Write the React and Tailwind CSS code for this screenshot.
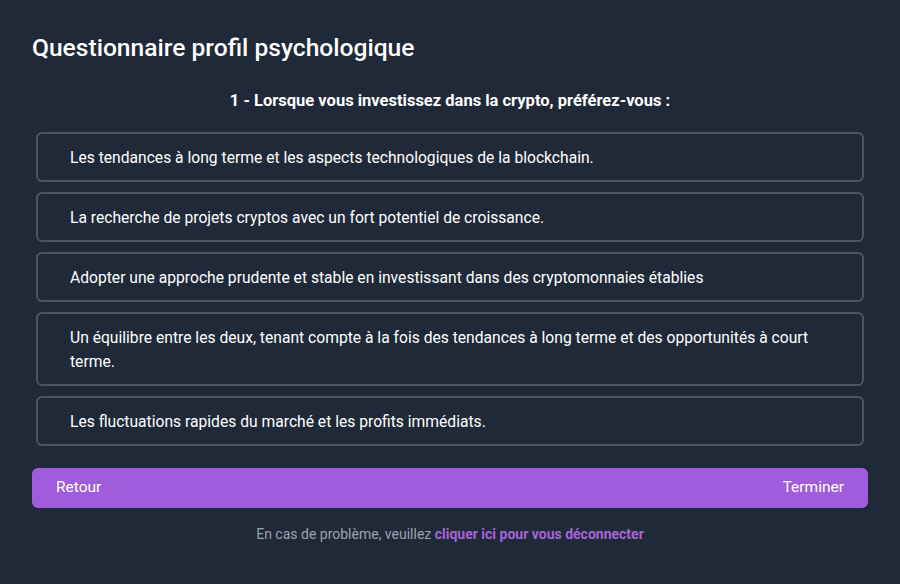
const options = [
  "Les tendances à long terme et les aspects technologiques de la blockchain.",
  "La recherche de projets cryptos avec un fort potentiel de croissance.",
  "Adopter une approche prudente et stable en investissant dans des cryptomonnaies établies",
  "Un équilibre entre les deux, tenant compte à la fois des tendances à long terme et des opportunités à court terme.",
  "Les fluctuations rapides du marché et les profits immédiats.",
]

const App = () => {
  return (
    <div className="min-h-[584px] w-[900px] bg-[#1f2937] font-['Roboto',sans-serif] text-white">
      <div className="px-8 pt-8">
        <h1 className="text-[24.6px] font-medium leading-8">Questionnaire profil psychologique</h1>

        <p className="mt-[25px] text-center text-[16.5px] font-bold leading-6">
          1 - Lorsque vous investissez dans la crypto, préférez-vous :
        </p>

        <div className="mx-1 mt-[19px] flex flex-col gap-[10px]">
          {options.map(opt => (
            <button
              key={opt}
              className="rounded-md border-2 border-[#4b5563] px-8 pt-3 pb-[10px] text-left text-[15.65px] leading-6 text-white"
            >
              {opt}
            </button>
          ))}
        </div>

        <div className="mt-[22px] flex h-10 items-center justify-between rounded-md bg-[#a05cda] px-6 text-[15.5px]">
          <span>Retour</span>
          <span>Terminer</span>
        </div>

        <p className="mt-4 text-center text-[14px] leading-5 text-[#9ca3af]">
          En cas de problème, veuillez{" "}
          <a href="#" className="font-bold text-[#a566d8]">cliquer ici pour vous déconnecter</a>
        </p>
      </div>
    </div>
  )
}

export default App
